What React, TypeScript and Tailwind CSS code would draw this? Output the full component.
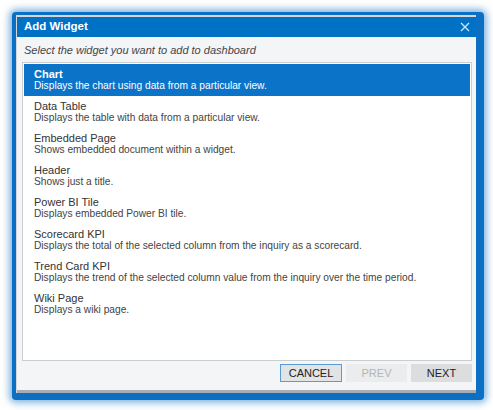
import React from "react";

const widgets = [
  { title: "Chart", desc: "Displays the chart using data from a particular view." },
  { title: "Data Table", desc: "Displays the table with data from a particular view." },
  { title: "Embedded Page", desc: "Shows embedded document within a widget." },
  { title: "Header", desc: "Shows just a title." },
  { title: "Power BI Tile", desc: "Displays embedded Power BI tile." },
  { title: "Scorecard KPI", desc: "Displays the total of the selected column from the inquiry as a scorecard." },
  { title: "Trend Card KPI", desc: "Displays the trend of the selected column value from the inquiry over the time period." },
  { title: "Wiki Page", desc: "Displays a wiki page." },
];

const App = () => {
  const selected = 0;

  return (
    <div className="w-[493px] h-[410px] bg-white pl-[12px] pt-[12px] font-['Liberation_Sans',Arial,sans-serif]">
      {/* blue window frame with glow */}
      <div className="w-[472px] h-[388px] bg-[#0b6fc3] rounded-[4px] shadow-[0_0_7px_3px_rgba(11,111,195,0.5)] pl-[4px] pt-[3px] pr-[8px] pb-[7px]">
        <div className="h-full flex flex-col border-t-2 border-l border-[#d4d6d9] bg-[#f4f5f7]">
          {/* header */}
          <div className="h-[20px] bg-[#0072c6] flex items-center justify-between pl-[7px] pr-[6px]">
            <span className="text-white text-[11.5px] font-bold">Add Widget</span>
            <svg width="10" height="10" viewBox="0 0 10 10" className="text-[#cfe3f5]">
              <path d="M1 1L9 9M9 1L1 9" stroke="currentColor" strokeWidth="1.3" />
            </svg>
          </div>

          {/* hint */}
          <div className="h-[25px] flex items-center pl-[7px] pt-[2px]">
            <span className="text-[11px] italic text-[#444]">Select the widget you want to add to dashboard</span>
          </div>

          {/* list */}
          <div className="ml-[5px] mr-[4px] h-[299px] bg-white border border-[#cbcdd0] p-px">
            {widgets.map((w, i) => (
              <div
                key={w.title}
                className={
                  i === selected
                    ? "h-[32px] pl-[10px] pt-[4px] bg-[#0b74c8] text-white leading-[12px]"
                    : "h-[32px] pl-[10px] pt-[4px] text-[#444] leading-[12px]"
                }
              >
                <div className={i === selected ? "text-[11px] font-bold" : "text-[11px] text-[#333]"}>{w.title}</div>
                <div className="text-[10.2px]">{w.desc}</div>
              </div>
            ))}
          </div>

          {/* footer */}
          <div className="flex-1 flex justify-end items-start gap-[4px] pt-[3px] pr-[4px]">
            <button className="w-[62px] h-[18px] bg-[#e2e3e5] border border-[#5b9bd5] text-[11px] text-[#222]">CANCEL</button>
            <button className="w-[61px] h-[18px] bg-[#ebecee] text-[11px] text-[#b5b5b5]">PREV</button>
            <button className="w-[61px] h-[18px] bg-[#dcdddf] text-[11px] text-[#222]">NEXT</button>
          </div>
          <div className="h-[3px] bg-[#a9acb0]" />
        </div>
      </div>
    </div>
  );
};

export default App;
